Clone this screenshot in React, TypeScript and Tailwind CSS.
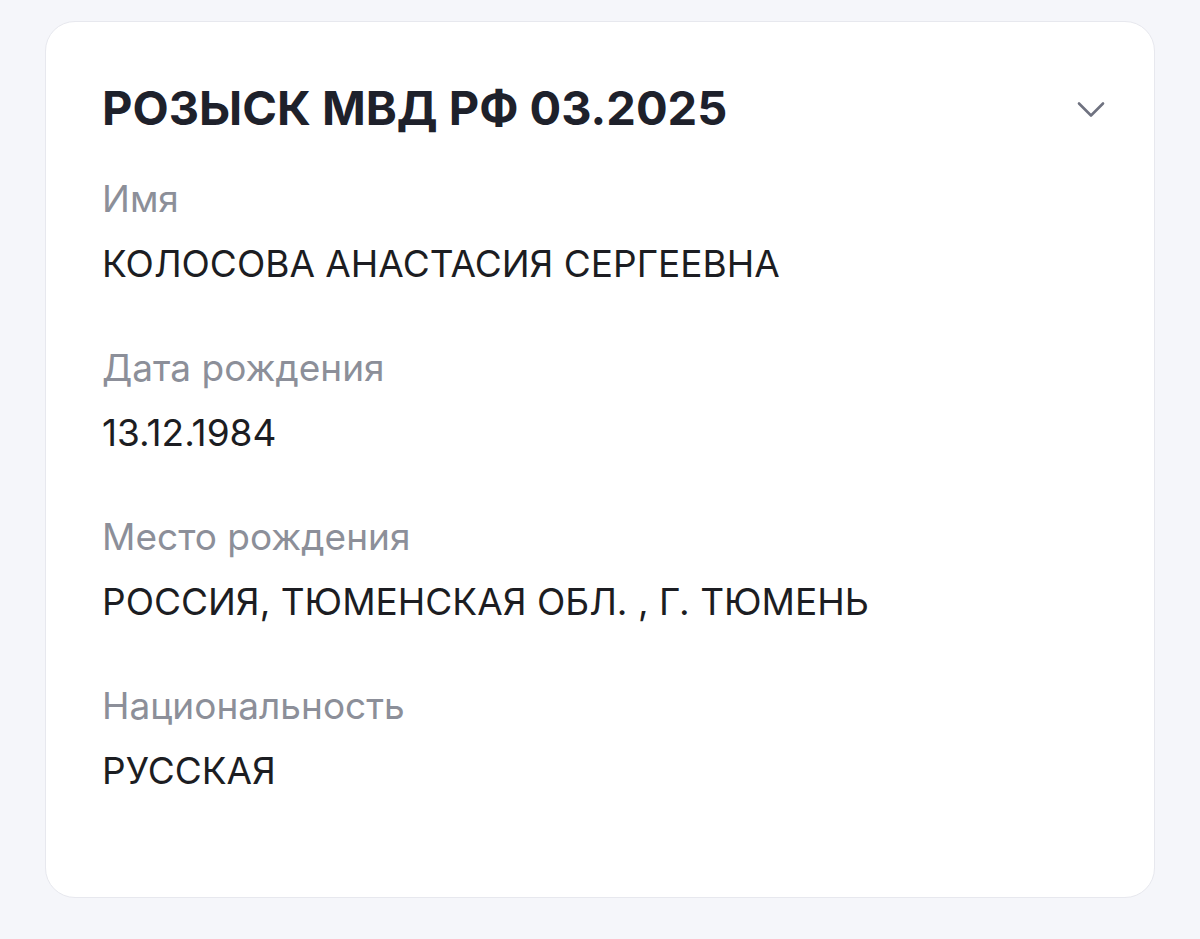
const fields = [
  { label: "Имя", value: "КОЛОСОВА АНАСТАСИЯ СЕРГЕЕВНА" },
  { label: "Дата рождения", value: "13.12.1984" },
  { label: "Место рождения", value: "РОССИЯ, ТЮМЕНСКАЯ ОБЛ. , Г. ТЮМЕНЬ" },
  { label: "Национальность", value: "РУССКАЯ" },
];

function Chevron() {
  return (
    <svg width="30" height="18" viewBox="0 0 30 18" fill="none" className="mt-[20px] shrink-0">
      <polyline
        points="3,3.5 15,15.5 27,3.5"
        stroke="#6f7280"
        strokeWidth="2.6"
        strokeLinecap="round"
        strokeLinejoin="round"
      />
    </svg>
  );
}

export default function App() {
  return (
    <main className="min-h-[939px] bg-[#f5f6fa] px-[45px] pt-[21px] pb-[41px]">
      <section className="h-[877px] rounded-[30px] border border-[#e7e8ee] bg-white pl-[56px] pr-[48px] pt-[58px] font-['Inter',sans-serif]">
        <div className="flex items-start justify-between">
          <h1 className="text-[47px] font-bold leading-[56px] text-[#1e212b]">РОЗЫСК МВД РФ 03.2025</h1>
          <Chevron />
        </div>

        <div className="mt-[41px] flex flex-col gap-[60px]">
          {fields.map((f) => (
            <div key={f.label} className="flex flex-col gap-[21px]">
              <div className="text-[37px] leading-[44px] text-[#8c8f99]">{f.label}</div>
              <div className="text-[37px] leading-[44px] text-[#1c1d22]">{f.value}</div>
            </div>
          ))}
        </div>
      </section>
    </main>
  );
}
